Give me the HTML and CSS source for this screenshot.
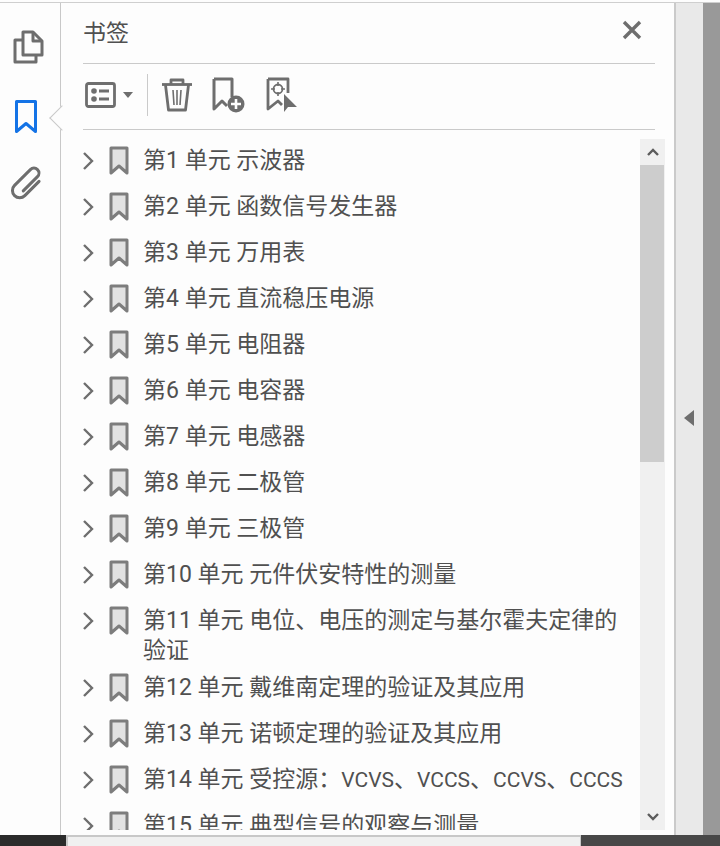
FILE: index.html
```html
<!DOCTYPE html>
<html lang="zh-CN">
<head>
    <meta charset="UTF-8">
    <title>书签</title>
    <link rel="stylesheet" href="styles.css">
</head>
<body>
<div class="window">
    <nav class="rail">
        <button class="rail-btn">
            <svg width="32" height="34" viewBox="0 0 32 34" fill="none" stroke="#6e6e6e" stroke-width="3" stroke-linejoin="round">
                <path d="M10 2h10l9 9v14H10z"/>
                <path d="M20 2v9h9"/>
                <path d="M10 10H2v22h21v-7"/>
            </svg>
        </button>
        <button class="rail-btn rail-active">
            <svg width="24" height="36" viewBox="0 0 24 36" fill="none" stroke="#1473e6" stroke-width="3" stroke-linejoin="round">
                <path d="M2.500 2.500h19v30l-9.500-8-9.500 8z"/>
            </svg>
        </button>
        <button class="rail-btn rail-clip">
            <svg width="38" height="38" viewBox="0 0 34 34" fill="none" stroke="#6e6e6e" stroke-width="2.700" stroke-linecap="round">
                <path transform="rotate(45 17 17)" d="M23 9V27a6.500 6.500 0 0 1-13 0V7a4.500 4.500 0 0 1 9 0V25"/>
            </svg>
        </button>
    </nav>
    <main class="panel">
        <header class="panel-head">
            <h1>书签</h1>
            <svg class="close" width="20" height="20" viewBox="0 0 20 20" stroke="#6e6e6e" stroke-width="3.400">
                <path d="M2 2l16 16M18 2L2 18"/>
            </svg>
        </header>
        <div class="toolbar">
            <button class="tool tool-options">
                <svg width="31" height="26" viewBox="0 0 31 26" fill="none" stroke="#6e6e6e" stroke-width="2.800">
                    <rect x="1.500" y="1.500" width="28" height="23" rx="2"/>
                    <path d="M14 9h10M14 17h10"/>
                    <circle cx="9" cy="9" r="2.800" fill="#6e6e6e" stroke="none"/>
                    <circle cx="9" cy="17" r="2.800" fill="#6e6e6e" stroke="none"/>
                </svg>
                <svg width="12" height="6" viewBox="0 0 12 6"><path d="M1 0h10L6 6z" fill="#6e6e6e"/></svg>
            </button>
            <span class="tool-sep"></span>
            <button class="tool tool-trash">
                <svg width="32" height="34" viewBox="0 0 32 34" fill="none" stroke="#6e6e6e" stroke-width="2.800" stroke-linejoin="round">
                    <path d="M1 6.500h30"/>
                    <path d="M10 6V2h12v4"/>
                    <path d="M4.500 7l3 25h17l3-25"/>
                    <path d="M12 12l1 15M16 12v15M20 12l-1 15" stroke-width="1.600"/>
                </svg>
            </button>
            <button class="tool tool-add">
                <svg width="34" height="36" viewBox="0 0 34 36" fill="none" stroke="#6e6e6e" stroke-width="3" stroke-linejoin="round">
                    <path d="M2 2h18v18M2 2v30l8-8 5 5"/>
                    <circle cx="24" cy="27" r="8.500" fill="#6e6e6e" stroke="none"/>
                    <path d="M19 27h10M24 22v10" stroke="#fff" stroke-width="2.600"/>
                </svg>
            </button>
            <button class="tool tool-find">
                <svg width="32" height="36" viewBox="0 0 32 36" fill="none" stroke="#6e6e6e" stroke-width="2.800" stroke-linejoin="round">
                    <path d="M2 2h20v14M2 2v30l10-8 4 4"/>
                    <circle cx="12" cy="12" r="4.500" stroke-width="1.800"/>
                    <path d="M12 5v4M12 15v4M5 12h4M15 12h4" stroke-width="1.600"/>
                    <path d="M18 17v18l4-5h9z" fill="#6e6e6e" stroke="none"/>
                </svg>
            </button>
        </div>
        <div class="list-wrap">
            <ul class="list" id="list"></ul>
            <div class="scrollbar">
                <svg class="arrow" width="12" height="8" viewBox="0 0 12 8" fill="none" stroke="#5c5c5c" stroke-width="2.400"><path d="M1 7l5-5 5 5"/></svg>
                <div class="track"><div class="thumb"></div></div>
                <svg class="arrow" width="12" height="8" viewBox="0 0 12 8" fill="none" stroke="#5c5c5c" stroke-width="2.400"><path d="M1 1l5 5 5-5"/></svg>
            </div>
        </div>
    </main>
    <div class="gutter">
        <svg width="10" height="16" viewBox="0 0 10 16"><path d="M10 0v16L0 8z" fill="#6e6e6e"/></svg>
    </div>
    <div class="page-edge"></div>
</div>
<footer class="bottom">
    <div class="bottom-left"></div>
    <div class="hscroll"></div>
    <div class="bottom-right"></div>
</footer>

<script>
    const units = [
        '第1 单元 示波器',
        '第2 单元 函数信号发生器',
        '第3 单元 万用表',
        '第4 单元 直流稳压电源',
        '第5 单元 电阻器',
        '第6 单元 电容器',
        '第7 单元 电感器',
        '第8 单元 二极管',
        '第9 单元 三极管',
        '第10 单元 元件伏安特性的测量',
        '第11 单元 电位、电压的测定与基尔霍夫定律的验证',
        '第12 单元 戴维南定理的验证及其应用',
        '第13 单元 诺顿定理的验证及其应用',
        '第14 单元 受控源：<span class="caps">VCVS</span>、<span class="caps">VCCS</span>、<span class="caps">CCVS</span>、<span class="caps">CCCS</span>',
        '第15 单元 典型信号的观察与测量'
    ];
    const list = document.getElementById('list');
    units.forEach((name) => {
        const li = document.createElement('li');
        li.className = 'item';
        li.innerHTML = `
            <svg class="chevron" width="12" height="20" viewBox="0 0 12 20" fill="none" stroke="#6e6e6e" stroke-width="2.400"><path d="M2 2l8 8-8 8"/></svg>
            <svg class="mark" width="20" height="30" viewBox="0 0 20 30"><path d="M2 2h16v25l-8-7-8 7z" fill="#e2e2e2" stroke="#7d7d7d" stroke-width="3" stroke-linejoin="round"/></svg>
            <span class="item-text">${name}</span>`;
        list.appendChild(li);
    });
</script>
</body>
</html>
```
FILE: styles.css
```css
* {
    box-sizing: border-box;
    margin: 0;
    padding: 0;
}

html, body {
    height: 100%;
    overflow: hidden;
}

body {
    background: #fdfdfd;
    color: #505050;
    font-family: Roboto, "Noto Sans CJK SC", sans-serif;
    display: flex;
    flex-direction: column;
    padding-top: 2px;
}

button {
    background: none;
    border: none;
    display: flex;
    align-items: center;
}

.window {
    flex: 1;
    min-height: 0;
    display: flex;
    border-top: 1px solid #cfcfcf;
}

.rail {
    position: relative;
    width: 61px;
    flex: none;
    border-right: 1px solid #c8c8c8;
    display: flex;
    flex-direction: column;
    align-items: center;
    gap: 34px;
    padding: 26px 3px 0 0;
}

.rail-btn {
    height: 36px;
    justify-content: center;
}

.rail-clip {
    margin-top: -4px;
    margin-right: 2px;
}

/* little notch pointing at the active tab */
.rail-active {
    position: relative;
    margin-right: 5px;
}

.rail-active::after {
    content: "";
    position: absolute;
    left: 39px;
    top: 10px;
    width: 17px;
    height: 17px;
    background: #fdfdfd;
    border-left: 1px solid #c8c8c8;
    border-bottom: 1px solid #c8c8c8;
    transform: rotate(45deg);
}

.panel {
    flex: 1;
    min-width: 0;
    border-right: 2px solid #cacaca;
    display: flex;
    flex-direction: column;
    padding: 0 0 5px 22px;
}

.panel-head {
    display: flex;
    justify-content: space-between;
    align-items: center;
    height: 61px;
    width: 572px;
    border-bottom: 1px solid #cacaca;
    padding-right: 13px;
}

h1 {
    font-size: 23px;
    font-weight: 400;
    color: #505050;
    margin-top: -4px;
}

.close {
    margin-top: -7px;
}

.toolbar {
    display: flex;
    align-items: center;
    height: 66px;
    width: 572px;
    border-bottom: 1px solid #cacaca;
    padding: 0 0 3px 2px;
}

.tool {
    display: flex;
    align-items: center;
}

.tool-options {
    gap: 6px;
}

.tool-sep {
    width: 1px;
    height: 42px;
    background: #cacaca;
    margin: 0 13px;
}

.tool-add {
    margin-left: 19px;
}

.tool-find {
    margin-left: 20px;
}

.list-wrap {
    flex: 1;
    min-height: 0;
    display: flex;
    margin-top: 9px;
    padding-right: 9px;
}

.list {
    flex: 1;
    min-width: 0;
    list-style: none;
    overflow: hidden;
}

.item {
    display: flex;
    min-height: 46px;
    padding-top: 7px;
    font-size: 23px;
    line-height: 30px;
}

.chevron {
    flex: none;
    margin: 5px 0 0 -1px;
}

.mark {
    flex: none;
    margin: 0 0 0 15px;
}

.item-text {
    margin-left: 14px;
    width: 480px;
}

.caps {
    font-size: 21px;
}

.scrollbar {
    width: 25px;
    flex: none;
    background: #f0f0f0;
    display: flex;
    flex-direction: column;
    align-items: center;
}

.arrow {
    flex: none;
    margin: 9px 0;
}

.track {
    flex: 1;
    width: 100%;
}

.thumb {
    width: 24px;
    height: 297px;
    background: #cdcdcd;
}

.gutter {
    width: 27px;
    flex: none;
    background: #e9e9e9;
    display: flex;
    align-items: center;
    padding: 0 0 3px 8px;
}

.page-edge {
    width: 17px;
    flex: none;
    background: #999;
}

.bottom {
    height: 11px;
    flex: none;
    display: flex;
}

.bottom-left {
    width: 66px;
    background: #2b2b2b;
}

.hscroll {
    width: 515px;
    background: #f0f0f0;
    border-top: 2px solid #c8c8c8;
    border-left: 2px solid #c8c8c8;
    border-right: 1px solid #c8c8c8;
}

.bottom-right {
    flex: 1;
    background: #484848;
}
```
